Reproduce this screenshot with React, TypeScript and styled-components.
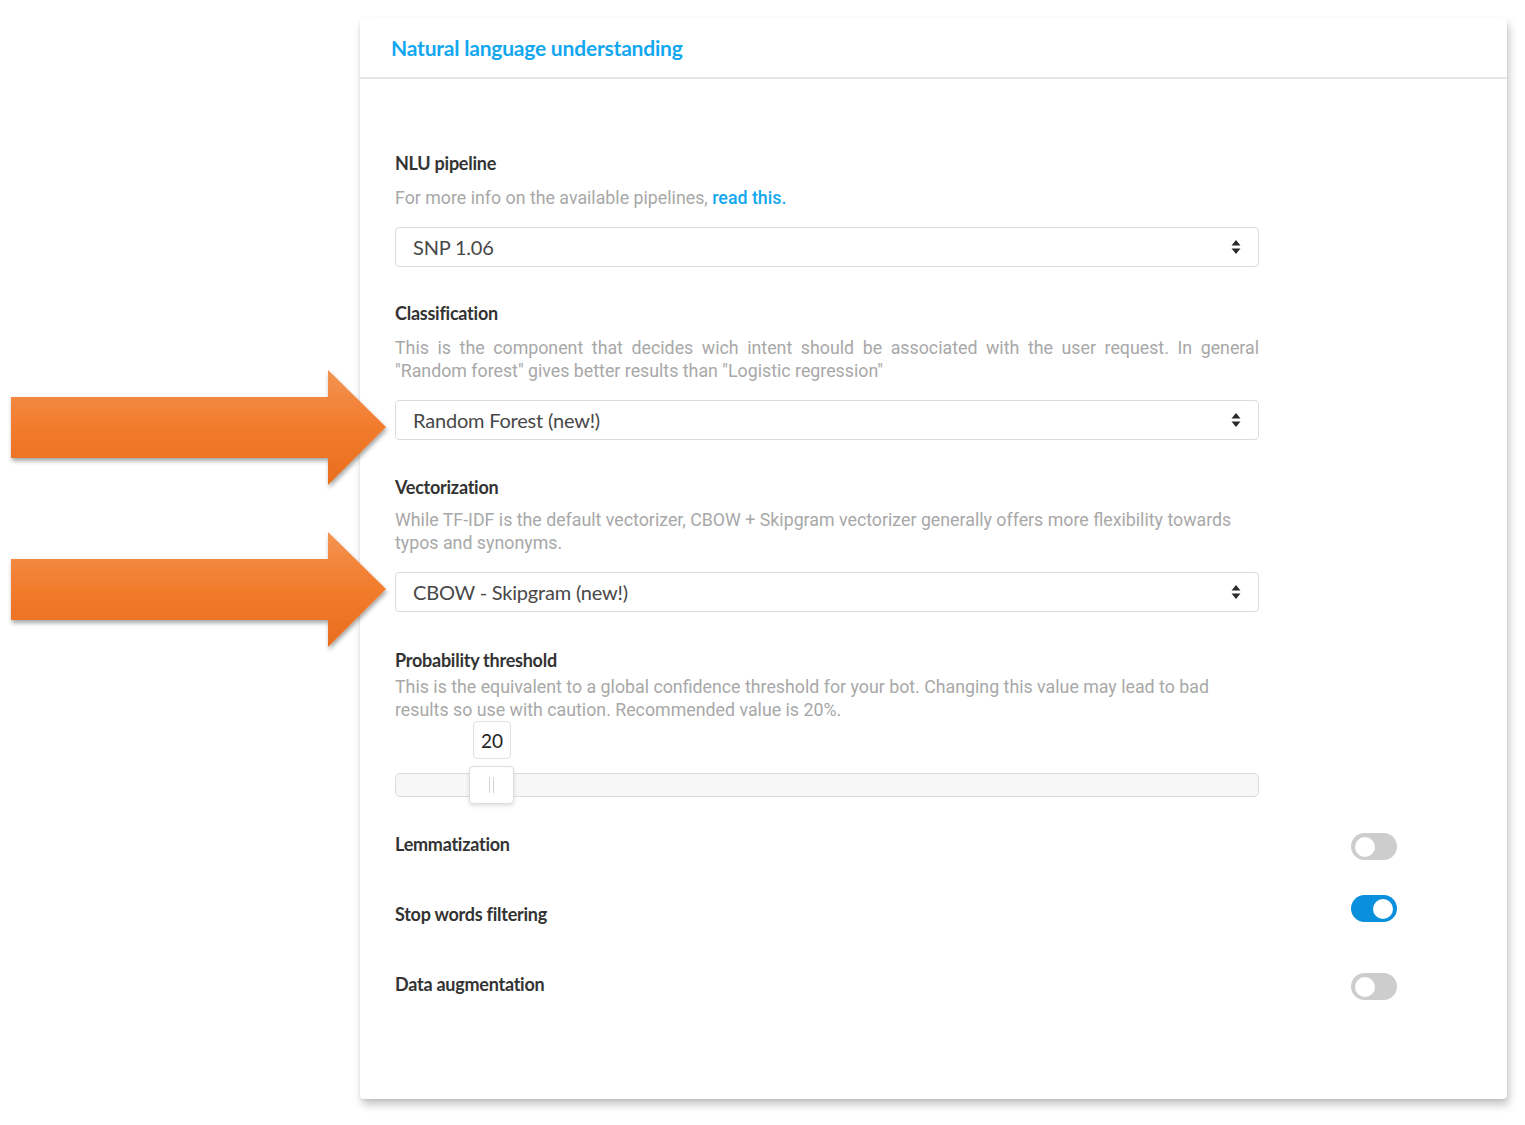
import styled, { createGlobalStyle } from "styled-components";

const GlobalStyle = createGlobalStyle`
	body {
		margin: 0;
		background: #ffffff;
		font-family: "Lato", "Noto Sans", sans-serif;
	}
`;

const Page = styled.div`
	padding: 18px 0 26px 360px;
	width: 1147px;
`;

const Card = styled.div`
	background: #ffffff;
	border-radius: 4px;
	box-shadow: 0 1px 3px rgba(0, 0, 0, 0.08), 2px 6px 8px rgba(0, 0, 0, 0.22);
`;

const CardHeader = styled.div`
	height: 59px;
	display: flex;
	align-items: center;
	padding-left: 31px;
	border-bottom: 2px solid #e6e6e6;
`;

const Title = styled.h2`
	margin: 0;
	font-size: 21px;
	font-weight: 700;
	letter-spacing: -0.2px;
	color: #13a7f0;
`;

const CardBody = styled.div`
	padding: 72px 110px 100px 35px;
`;

const Section = styled.div<{ $gap?: number }>`
	margin-bottom: ${(p) => p.$gap ?? 34}px;
	width: 864px;
`;

const Label = styled.div`
	font-size: 18px;
	font-weight: 700;
	line-height: 24px;
	color: #333;
	letter-spacing: -0.25px;
`;

const Desc = styled.p<{ $top?: number; $justify?: boolean }>`
	margin: ${(p) => p.$top ?? 11}px 0 18px;
	font-family: "Roboto", "Liberation Sans", sans-serif;
	font-size: 17.8px;
	line-height: 23px;
	color: #a8a8a8;
	text-align: ${(p) => (p.$justify ? "justify" : "left")};
`;

const Link = styled.a`
	color: #13a7f0;
	text-decoration: none;
	font-weight: 500;
`;

const SelectWrap = styled.div`
	position: relative;
`;

const SelectBox = styled.div`
	height: 38px;
	border: 1px solid #dcdcdc;
	border-radius: 4px;
	display: flex;
	align-items: center;
	justify-content: space-between;
	padding: 0 17px 0 17px;
	font-size: 20px;
	color: #484848;
	letter-spacing: -0.2px;
	background: #fff;
`;

const Arrow = styled.svg<{ $top: number }>`
	position: absolute;
	right: calc(100% + 8px);
	top: ${(p) => p.$top}px;
	overflow: visible;
`;

const SliderArea = styled.div`
	position: relative;
	height: 84px;
`;

const Track = styled.div`
	position: absolute;
	left: 0;
	right: 0;
	top: 52px;
	height: 22px;
	border: 1px solid #dcdcdc;
	border-radius: 5px;
	background: #f7f7f7;
`;

const Handle = styled.div`
	position: absolute;
	top: 45px;
	width: 43px;
	height: 36px;
	margin-left: -22px;
	background: #fff;
	border: 1px solid #dedede;
	border-radius: 4px;
	box-shadow: 0 2px 4px rgba(0, 0, 0, 0.12);
	display: flex;
	justify-content: center;
	align-items: center;
	gap: 3px;
	&::before,
	&::after {
		content: "";
		width: 1px;
		height: 16px;
		background: #d4d4d4;
	}
`;

const ValueBubble = styled.div`
	position: absolute;
	top: 0;
	width: 36px;
	height: 36px;
	margin-left: -18px;
	border: 1px solid #e0e0e0;
	border-radius: 4px;
	background: #fff;
	display: flex;
	align-items: center;
	justify-content: center;
	font-size: 19px;
	color: #222;
`;

const ToggleRow = styled.div`
	display: flex;
	align-items: center;
	justify-content: space-between;
	width: 1002px;
	height: 30px;
	margin-bottom: 40px;
	&:last-child {
		margin-bottom: 0;
	}
`;

const Toggle = styled.div<{ $on?: boolean; $shift?: number }>`
	width: 46px;
	height: 27px;
	border-radius: 14px;
	background: ${(p) => (p.$on ? "#0a8fdc" : "#cdcdcd")};
	display: flex;
	align-items: center;
	justify-content: ${(p) => (p.$on ? "flex-end" : "flex-start")};
	padding: 0 4px;
	box-sizing: border-box;
	margin-top: ${(p) => p.$shift ?? 5}px;
	&::after {
		content: "";
		width: 20px;
		height: 20px;
		border-radius: 50%;
		background: #fff;
	}
`;

const Caret = () => (
	<svg width="10" height="16" viewBox="0 0 10 16">
		<path d="M5 1 L9.5 6.5 L0.5 6.5 Z" fill="#2a2a2a" />
		<path d="M5 15 L9.5 9.5 L0.5 9.5 Z" fill="#2a2a2a" />
	</svg>
);

const OrangeArrow = ({ top }: { top: number }) => (
	<Arrow $top={top} width="376" height="118" viewBox="0 0 376 118">
		<defs>
			<linearGradient id="arrowFill" x1="0" y1="0" x2="0" y2="1">
				<stop offset="0" stopColor="#f39453" />
				<stop offset="0.5" stopColor="#f27b2c" />
				<stop offset="1" stopColor="#e96d1e" />
			</linearGradient>
			<filter id="arrowShadow" x="-5%" y="-10%" width="110%" height="130%">
				<feDropShadow dx="1" dy="3" stdDeviation="2" floodColor="#000" floodOpacity="0.35" />
			</filter>
		</defs>
		<path
			d="M0 27 L317 27 L317 0 L375 57 L317 115 L317 88 L0 88 Z"
			fill="url(#arrowFill)"
			filter="url(#arrowShadow)"
		/>
	</Arrow>
);

const Select = ({ value, arrowTop }: { value: string; arrowTop?: number }) => (
	<SelectWrap>
		{arrowTop !== undefined && <OrangeArrow top={arrowTop} />}
		<SelectBox>
			<span>{value}</span>
			<Caret />
		</SelectBox>
	</SelectWrap>
);

const Slider = ({ value, min, max }: { value: number; min: number; max: number }) => {
	const pct = ((value - min) / (max - min)) * 100;
	return (
		<SliderArea>
			<Track />
			<ValueBubble style={{ left: `${pct}%` }}>{value}</ValueBubble>
			<Handle style={{ left: `${pct}%` }} />
		</SliderArea>
	);
};

export default function App() {
	return (
		<>
			<GlobalStyle />
			<Page>
				<Card>
					<CardHeader>
						<Title>Natural language understanding</Title>
					</CardHeader>
					<CardBody>
						<Section>
							<Label>NLU pipeline</Label>
							<Desc>
								For more info on the available pipelines, <Link>read this.</Link>
							</Desc>
							<Select value="SNP 1.06" />
						</Section>
						<Section $gap={35}>
							<Label>Classification</Label>
							<Desc $justify>
								This is the component that decides wich intent should be associated
								with the user request. In general "Random forest" gives better results
								than "Logistic regression"
							</Desc>
							<Select value="Random Forest (new!)" arrowTop={-30} />
						</Section>
						<Section $gap={36}>
							<Label>Vectorization</Label>
							<Desc $top={9}>
								While TF-IDF is the default vectorizer, CBOW + Skipgram vectorizer
								generally offers more flexibility towards typos and synonyms.
							</Desc>
							<Select value="CBOW - Skipgram (new!)" arrowTop={-40} />
						</Section>
						<Section $gap={24}>
							<Label>Probability threshold</Label>
							<Desc $top={3} style={{ marginBottom: 0 }}>
								This is the equivalent to a global confidence threshold for your bot.
								Changing this value may lead to bad results so use with caution.
								Recommended value is 20%.
							</Desc>
							<Slider value={20} min={10} max={100} />
						</Section>
						<ToggleRow>
							<Label>Lemmatization</Label>
							<Toggle />
						</ToggleRow>
						<ToggleRow>
							<Label>Stop words filtering</Label>
							<Toggle $on $shift={-11} />
						</ToggleRow>
						<ToggleRow>
							<Label>Data augmentation</Label>
							<Toggle />
						</ToggleRow>
					</CardBody>
				</Card>
			</Page>
		</>
	);
}
